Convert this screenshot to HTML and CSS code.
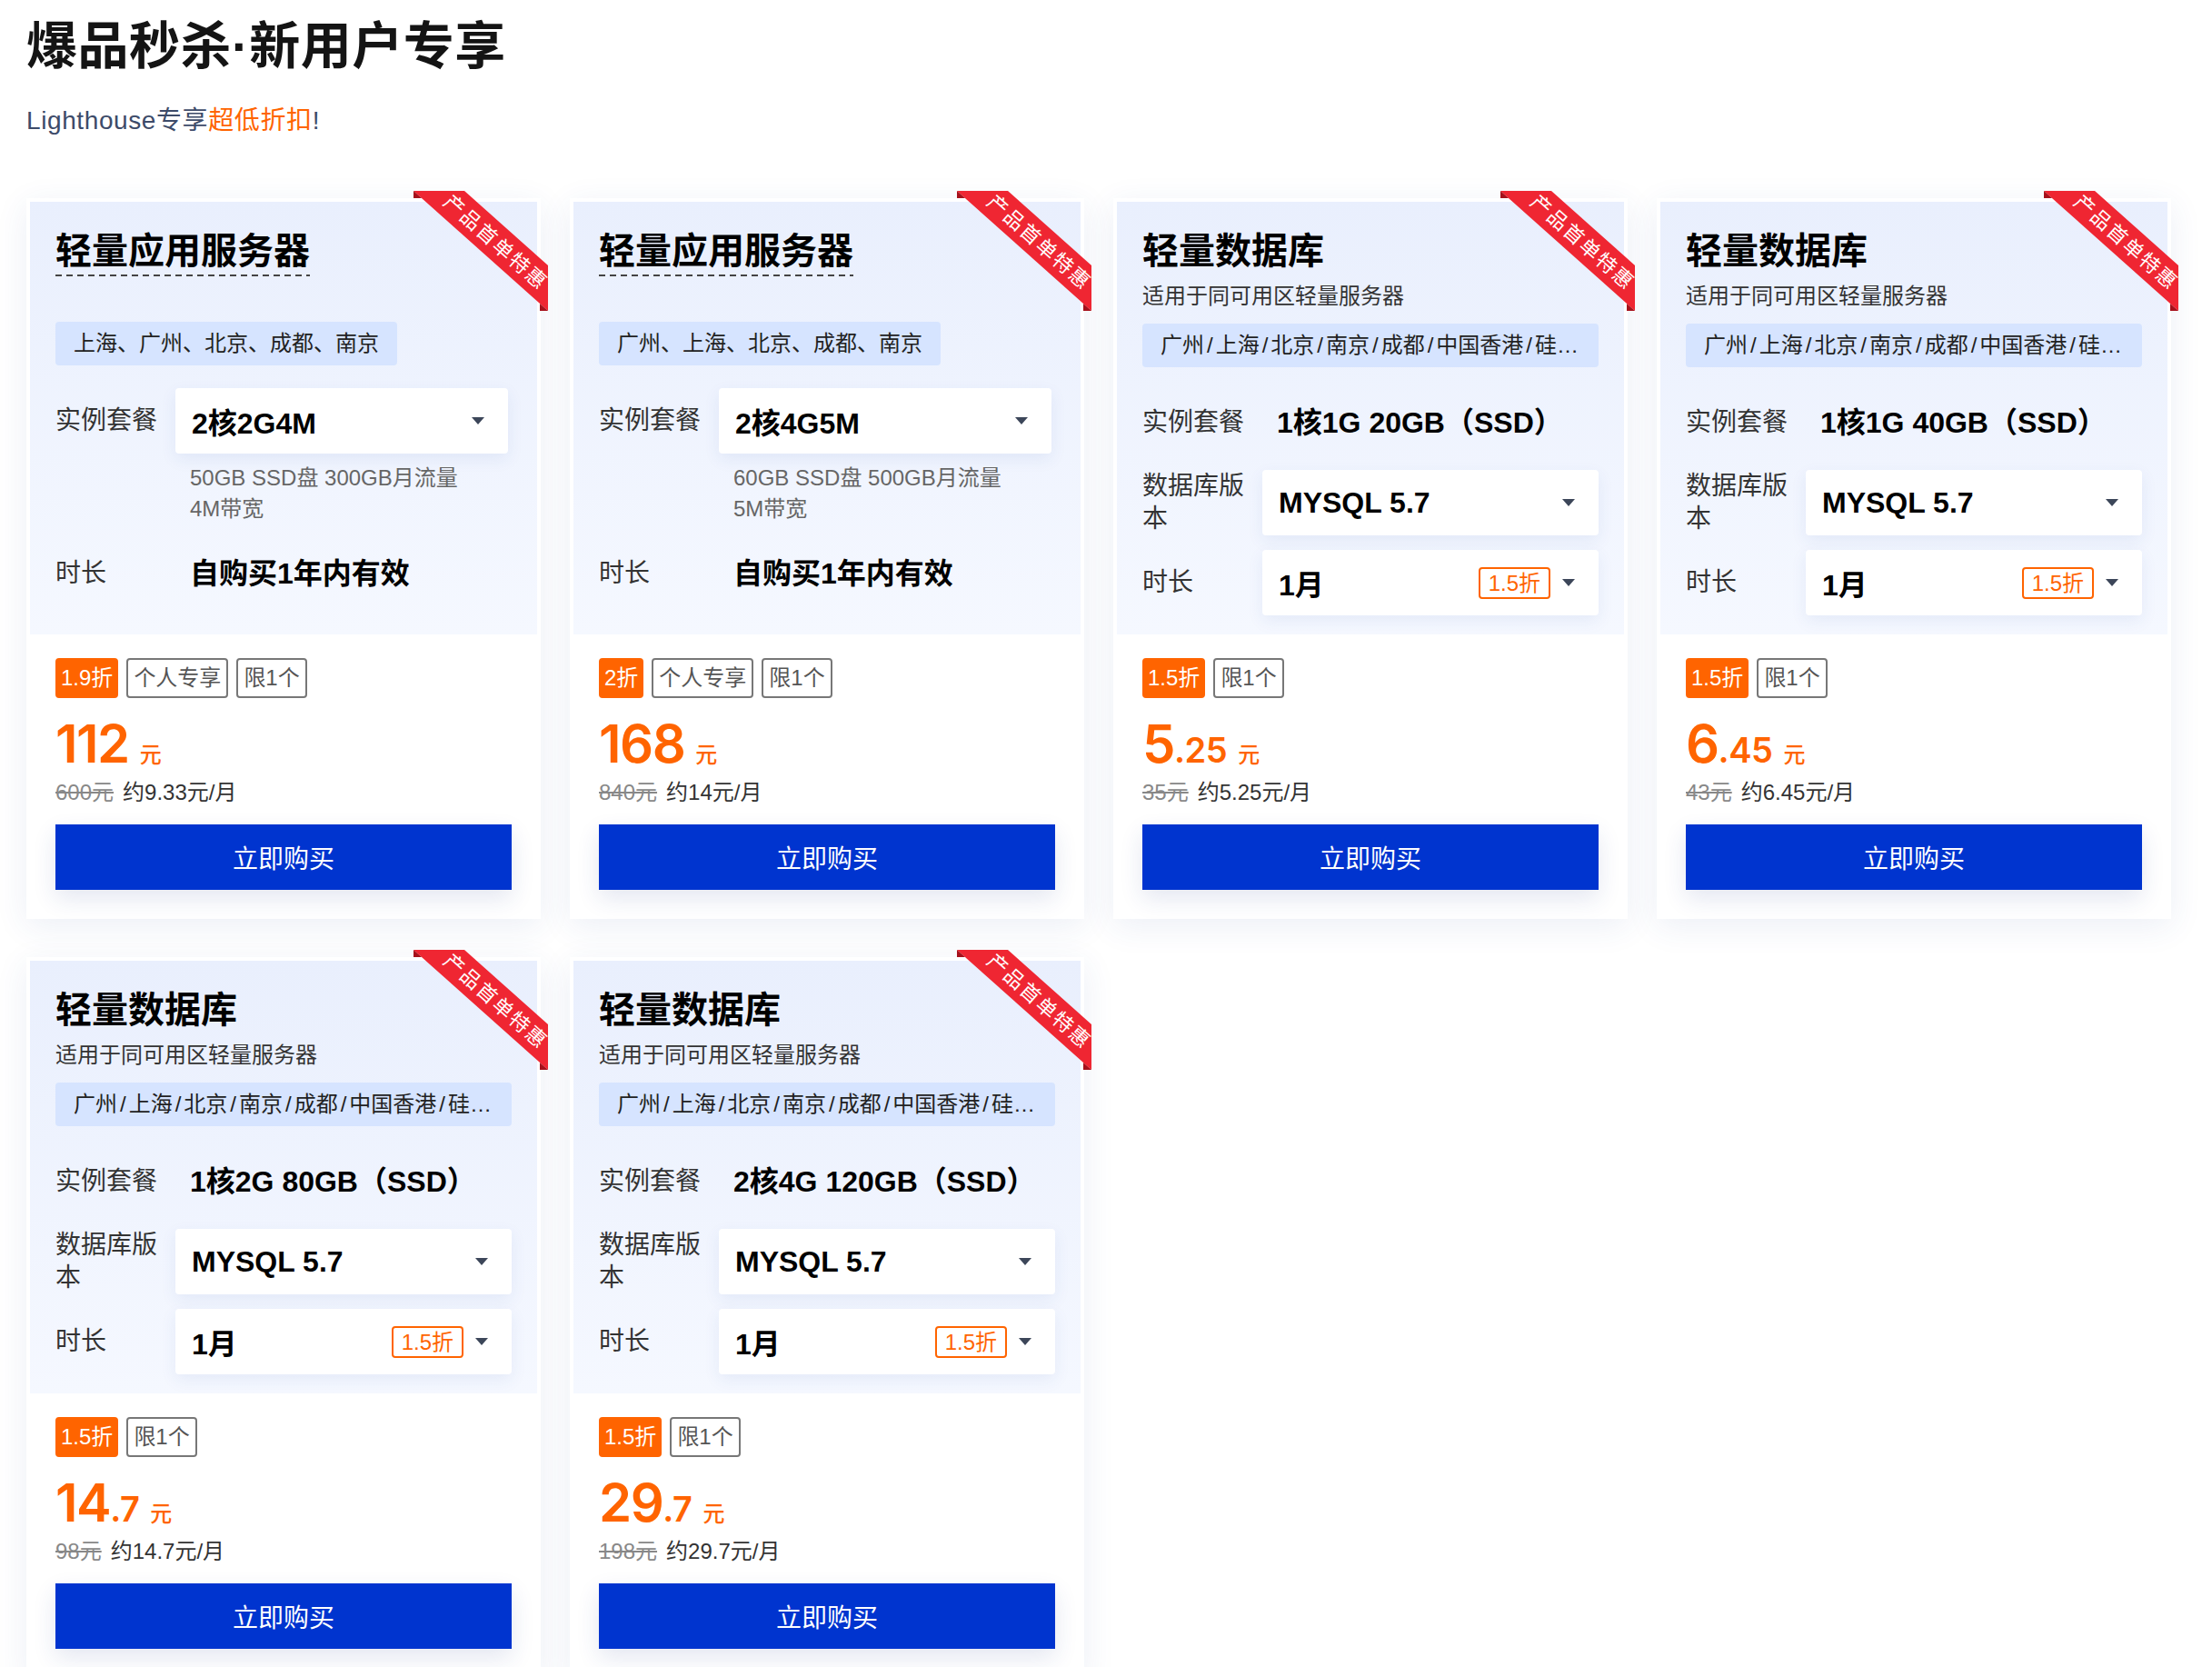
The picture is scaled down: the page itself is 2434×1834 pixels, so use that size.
FILE: index.html
```html
<!DOCTYPE html>
<html lang="zh-CN">
<head>
<meta charset="utf-8">
<title>爆品秒杀·新用户专享</title>
<link rel="stylesheet" href="styles.css">
</head>
<body>
<div class="page">
  <h1 class="page-title">爆品秒杀·新用户专享</h1>
  <p class="page-sub">Lighthouse专享<em>超低折扣</em>!</p>

  <div class="grid">

    <!-- card 1 -->
    <div class="card">
      <div class="ribbon">
        <svg class="ribbon-shape" width="148" height="132" viewBox="0 0 148 132"><polygon points="0,0 56,0 148,82 148,132" fill="#ef2632"/><polygon points="0,0 9,8 0,8" fill="#a6111b"/><polygon points="139,124 148,132 139,132" fill="#a6111b"/></svg>
        <span class="ribbon-text">产品首单特惠</span>
      </div>
      <div class="card-head">
        <h3 class="card-title card-title--dashed">轻量应用服务器</h3>
        <div class="loc loc--fit">上海、广州、北京、成都、南京</div>
        <div class="rows">
          <div class="row">
            <div class="row-label">实例套餐</div>
            <div class="select select--narrow"><span class="select-text">2核2G4M</span><i class="caret"></i></div>
          </div>
          <div class="desc">50GB SSD盘 300GB月流量<br>4M带宽</div>
          <div class="row">
            <div class="row-label">时长</div>
            <div class="row-value">自购买1年内有效</div>
          </div>
        </div>
      </div>
      <div class="card-body">
        <div class="tags"><span class="tag tag--hot">1.9折</span><span class="tag">个人专享</span><span class="tag">限1个</span></div>
        <div class="price">112<span class="unit">元</span></div>
        <div class="orig"><s>600元</s>约9.33元/月</div>
        <button class="buy">立即购买</button>
      </div>
    </div>

    <!-- card 2 -->
    <div class="card">
      <div class="ribbon">
        <svg class="ribbon-shape" width="148" height="132" viewBox="0 0 148 132"><polygon points="0,0 56,0 148,82 148,132" fill="#ef2632"/><polygon points="0,0 9,8 0,8" fill="#a6111b"/><polygon points="139,124 148,132 139,132" fill="#a6111b"/></svg>
        <span class="ribbon-text">产品首单特惠</span>
      </div>
      <div class="card-head">
        <h3 class="card-title card-title--dashed">轻量应用服务器</h3>
        <div class="loc loc--fit">广州、上海、北京、成都、南京</div>
        <div class="rows">
          <div class="row">
            <div class="row-label">实例套餐</div>
            <div class="select select--narrow"><span class="select-text">2核4G5M</span><i class="caret"></i></div>
          </div>
          <div class="desc">60GB SSD盘 500GB月流量<br>5M带宽</div>
          <div class="row">
            <div class="row-label">时长</div>
            <div class="row-value">自购买1年内有效</div>
          </div>
        </div>
      </div>
      <div class="card-body">
        <div class="tags"><span class="tag tag--hot">2折</span><span class="tag">个人专享</span><span class="tag">限1个</span></div>
        <div class="price">168<span class="unit">元</span></div>
        <div class="orig"><s>840元</s>约14元/月</div>
        <button class="buy">立即购买</button>
      </div>
    </div>

    <!-- card 3 -->
    <div class="card">
      <div class="ribbon">
        <svg class="ribbon-shape" width="148" height="132" viewBox="0 0 148 132"><polygon points="0,0 56,0 148,82 148,132" fill="#ef2632"/><polygon points="0,0 9,8 0,8" fill="#a6111b"/><polygon points="139,124 148,132 139,132" fill="#a6111b"/></svg>
        <span class="ribbon-text">产品首单特惠</span>
      </div>
      <div class="card-head">
        <h3 class="card-title">轻量数据库</h3>
        <p class="card-sub">适用于同可用区轻量服务器</p>
        <div class="loc">广州<span class="sep">/</span>上海<span class="sep">/</span>北京<span class="sep">/</span>南京<span class="sep">/</span>成都<span class="sep">/</span>中国香港<span class="sep">/</span>硅谷<span class="sep">/</span>新加坡<span class="sep">/</span>法兰克福</div>
        <div class="rows">
          <div class="row">
            <div class="row-label">实例套餐</div>
            <div class="row-value">1核1G 20GB（SSD）</div>
          </div>
          <div class="row">
            <div class="row-label">数据库版本</div>
            <div class="select"><span class="select-text">MYSQL 5.7</span><i class="caret"></i></div>
          </div>
          <div class="row">
            <div class="row-label">时长</div>
            <div class="select"><span class="select-text">1月</span><span class="badge">1.5折</span><i class="caret"></i></div>
          </div>
        </div>
      </div>
      <div class="card-body">
        <div class="tags"><span class="tag tag--hot">1.5折</span><span class="tag">限1个</span></div>
        <div class="price">5<span class="dec">.25</span><span class="unit">元</span></div>
        <div class="orig"><s>35元</s>约5.25元/月</div>
        <button class="buy">立即购买</button>
      </div>
    </div>

    <!-- card 4 -->
    <div class="card">
      <div class="ribbon">
        <svg class="ribbon-shape" width="148" height="132" viewBox="0 0 148 132"><polygon points="0,0 56,0 148,82 148,132" fill="#ef2632"/><polygon points="0,0 9,8 0,8" fill="#a6111b"/><polygon points="139,124 148,132 139,132" fill="#a6111b"/></svg>
        <span class="ribbon-text">产品首单特惠</span>
      </div>
      <div class="card-head">
        <h3 class="card-title">轻量数据库</h3>
        <p class="card-sub">适用于同可用区轻量服务器</p>
        <div class="loc">广州<span class="sep">/</span>上海<span class="sep">/</span>北京<span class="sep">/</span>南京<span class="sep">/</span>成都<span class="sep">/</span>中国香港<span class="sep">/</span>硅谷<span class="sep">/</span>新加坡<span class="sep">/</span>法兰克福</div>
        <div class="rows">
          <div class="row">
            <div class="row-label">实例套餐</div>
            <div class="row-value">1核1G 40GB（SSD）</div>
          </div>
          <div class="row">
            <div class="row-label">数据库版本</div>
            <div class="select"><span class="select-text">MYSQL 5.7</span><i class="caret"></i></div>
          </div>
          <div class="row">
            <div class="row-label">时长</div>
            <div class="select"><span class="select-text">1月</span><span class="badge">1.5折</span><i class="caret"></i></div>
          </div>
        </div>
      </div>
      <div class="card-body">
        <div class="tags"><span class="tag tag--hot">1.5折</span><span class="tag">限1个</span></div>
        <div class="price">6<span class="dec">.45</span><span class="unit">元</span></div>
        <div class="orig"><s>43元</s>约6.45元/月</div>
        <button class="buy">立即购买</button>
      </div>
    </div>

    <!-- card 5 -->
    <div class="card">
      <div class="ribbon">
        <svg class="ribbon-shape" width="148" height="132" viewBox="0 0 148 132"><polygon points="0,0 56,0 148,82 148,132" fill="#ef2632"/><polygon points="0,0 9,8 0,8" fill="#a6111b"/><polygon points="139,124 148,132 139,132" fill="#a6111b"/></svg>
        <span class="ribbon-text">产品首单特惠</span>
      </div>
      <div class="card-head">
        <h3 class="card-title">轻量数据库</h3>
        <p class="card-sub">适用于同可用区轻量服务器</p>
        <div class="loc">广州<span class="sep">/</span>上海<span class="sep">/</span>北京<span class="sep">/</span>南京<span class="sep">/</span>成都<span class="sep">/</span>中国香港<span class="sep">/</span>硅谷<span class="sep">/</span>新加坡<span class="sep">/</span>法兰克福</div>
        <div class="rows">
          <div class="row">
            <div class="row-label">实例套餐</div>
            <div class="row-value">1核2G 80GB（SSD）</div>
          </div>
          <div class="row">
            <div class="row-label">数据库版本</div>
            <div class="select"><span class="select-text">MYSQL 5.7</span><i class="caret"></i></div>
          </div>
          <div class="row">
            <div class="row-label">时长</div>
            <div class="select"><span class="select-text">1月</span><span class="badge">1.5折</span><i class="caret"></i></div>
          </div>
        </div>
      </div>
      <div class="card-body">
        <div class="tags"><span class="tag tag--hot">1.5折</span><span class="tag">限1个</span></div>
        <div class="price">14<span class="dec">.7</span><span class="unit">元</span></div>
        <div class="orig"><s>98元</s>约14.7元/月</div>
        <button class="buy">立即购买</button>
      </div>
    </div>

    <!-- card 6 -->
    <div class="card">
      <div class="ribbon">
        <svg class="ribbon-shape" width="148" height="132" viewBox="0 0 148 132"><polygon points="0,0 56,0 148,82 148,132" fill="#ef2632"/><polygon points="0,0 9,8 0,8" fill="#a6111b"/><polygon points="139,124 148,132 139,132" fill="#a6111b"/></svg>
        <span class="ribbon-text">产品首单特惠</span>
      </div>
      <div class="card-head">
        <h3 class="card-title">轻量数据库</h3>
        <p class="card-sub">适用于同可用区轻量服务器</p>
        <div class="loc">广州<span class="sep">/</span>上海<span class="sep">/</span>北京<span class="sep">/</span>南京<span class="sep">/</span>成都<span class="sep">/</span>中国香港<span class="sep">/</span>硅谷<span class="sep">/</span>新加坡<span class="sep">/</span>法兰克福</div>
        <div class="rows">
          <div class="row">
            <div class="row-label">实例套餐</div>
            <div class="row-value">2核4G 120GB（SSD）</div>
          </div>
          <div class="row">
            <div class="row-label">数据库版本</div>
            <div class="select"><span class="select-text">MYSQL 5.7</span><i class="caret"></i></div>
          </div>
          <div class="row">
            <div class="row-label">时长</div>
            <div class="select"><span class="select-text">1月</span><span class="badge">1.5折</span><i class="caret"></i></div>
          </div>
        </div>
      </div>
      <div class="card-body">
        <div class="tags"><span class="tag tag--hot">1.5折</span><span class="tag">限1个</span></div>
        <div class="price">29<span class="dec">.7</span><span class="unit">元</span></div>
        <div class="orig"><s>198元</s>约29.7元/月</div>
        <button class="buy">立即购买</button>
      </div>
    </div>

  </div>
</div>
</body>
</html>
```

FILE: styles.css
```css
* { box-sizing: border-box; }

body {
  margin: 0;
  background: #fff;
  color: #000;
  font-family: "Liberation Sans", "Noto Sans CJK SC", sans-serif;
}

.page {
  padding: 13px 0 0 29px;
}

.page-title {
  margin: 0;
  font-size: 56px;
  line-height: 76px;
  font-weight: 700;
  color: #141414;
  letter-spacing: 0.5px;
}

.page-sub {
  margin: 24px 0 0;
  font-size: 28px;
  line-height: 40px;
  color: #3d4b69;
  letter-spacing: 0.6px;
}

.page-sub em {
  font-style: normal;
  color: #ff6400;
}

.grid {
  margin-top: 65px;
  display: grid;
  grid-template-columns: repeat(4, 566px);
  column-gap: 32px;
  row-gap: 42px;
}

.card {
  position: relative;
  display: flex;
  flex-direction: column;
  padding: 4px;
  background: #fff;
  box-shadow: 0 8px 34px rgba(44, 82, 160, 0.09);
}

/* corner ribbon */
.ribbon {
  position: absolute;
  top: -8px;
  right: -8px;
  width: 148px;
  height: 132px;
  z-index: 2;
}

.ribbon-shape {
  display: block;
}

.ribbon-text {
  position: absolute;
  left: 90px;
  top: 57px;
  transform: translate(-50%, -50%) rotate(41.7deg);
  white-space: nowrap;
  font-size: 22px;
  line-height: 1;
  letter-spacing: 2px;
  color: #fff;
}

.card-head {
  flex: 1;
  padding: 28px 28px 21px;
  background: linear-gradient(180deg, #e9effd 0%, #f5f8ff 100%);
}

.card-title {
  margin: 0;
  font-size: 40px;
  line-height: 52px;
  font-weight: 700;
  color: #000;
}

.card-title--dashed {
  width: fit-content;
  padding-bottom: 2px;
  background: repeating-linear-gradient(90deg, #444 0 7px, transparent 7px 12px) left bottom / 100% 2px no-repeat;
}

.card-sub {
  margin: 8px 0 0;
  font-size: 24px;
  line-height: 32px;
  color: #333;
}

.loc {
  margin-top: 14px;
  height: 48px;
  padding: 0 20px;
  border-radius: 4px;
  background: #d6e4ff;
  font-size: 24px;
  line-height: 48px;
  color: #222;
  white-space: nowrap;
  overflow: hidden;
  text-overflow: ellipsis;
}

.loc .sep {
  padding: 0 3px;
}

.loc--fit {
  width: fit-content;
  margin-top: 50px;
}

.rows {
  margin-top: 25px;
  display: flex;
  flex-direction: column;
  gap: 16px;
}

.row {
  display: flex;
  align-items: center;
  height: 72px;
}

.row-label {
  flex: none;
  width: 112px;
  margin-right: 20px;
  font-size: 28px;
  line-height: 36px;
  color: #333;
}

.row-value {
  flex: 1;
  padding-left: 16px;
  font-size: 32px;
  line-height: 40px;
  font-weight: 700;
  color: #000;
  white-space: nowrap;
}

.select {
  flex: 1;
  display: flex;
  align-items: center;
  height: 72px;
  padding: 0 26px 0 18px;
  border-radius: 4px;
  background: #fff;
  box-shadow: 0 6px 18px rgba(40, 80, 170, 0.08);
  font-size: 32px;
  font-weight: 700;
  color: #000;
}

.select--narrow {
  margin-right: 4px;
}

.select-text {
  flex: 1;
}

.badge {
  margin-right: 13px;
  padding: 0 9px;
  border: 2px solid #ff6400;
  border-radius: 4px;
  font-size: 24px;
  line-height: 31px;
  font-weight: 400;
  color: #ff6400;
}

.caret {
  width: 0;
  height: 0;
  border-left: 7.5px solid transparent;
  border-right: 7.5px solid transparent;
  border-top: 8px solid #3c4659;
}

.desc {
  margin: -6px 0 2px 148px;
  font-size: 24px;
  line-height: 34px;
  color: #666;
}

.card-body {
  padding: 26px 28px 28px;
}

.tags {
  display: flex;
  gap: 9px;
  height: 44px;
}

.tag {
  padding: 0 6px;
  border: 2px solid #777;
  border-radius: 4px;
  font-size: 24px;
  line-height: 40px;
  color: #555;
}

.tag--hot {
  padding: 0 4px;
  border-color: #ff6400;
  background: #ff6400;
  color: #fff;
}

.price {
  margin-top: 18px;
  height: 64px;
  font-family: Inter, "Liberation Sans", sans-serif;
  font-size: 58px;
  line-height: 64px;
  font-weight: 600;
  letter-spacing: -1.5px;
  color: #ff6400;
  white-space: nowrap;
}

.price .dec {
  font-size: 38px;
  line-height: 1;
  letter-spacing: -0.5px;
}

.price .unit {
  margin-left: 12px;
  font-family: "Liberation Sans", "Noto Sans CJK SC", sans-serif;
  font-size: 24px;
  line-height: 1;
  font-weight: 500;
  letter-spacing: 0;
}

.orig {
  margin-top: 6px;
  font-size: 24px;
  line-height: 32px;
  color: #333;
}

.orig s {
  margin-right: 10px;
  color: #888;
}

.buy {
  display: block;
  width: 100%;
  height: 72px;
  margin-top: 19px;
  border: 0;
  background: #0034cf;
  box-shadow: 0 10px 26px rgba(30, 60, 140, 0.12);
  font-family: inherit;
  font-size: 28px;
  color: #fff;
  cursor: pointer;
}
```
